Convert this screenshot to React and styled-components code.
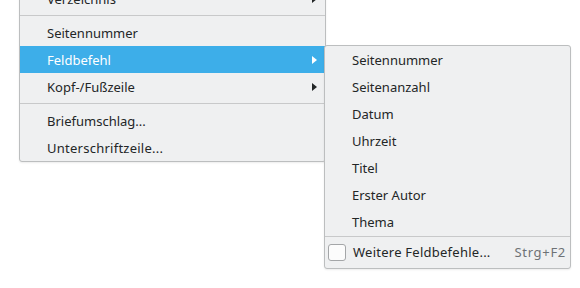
import React from "react";
import styled, { createGlobalStyle } from "styled-components";

const GlobalStyle = createGlobalStyle`
  html, body {
    margin: 0;
    padding: 0;
    background: #ffffff;
  }
  body {
    font-family: "Noto Sans", "DejaVu Sans", sans-serif;
    font-size: 13px;
    color: #232627;
    overflow: hidden;
  }
`;

const Stage = styled.div`
  display: flex;
  align-items: flex-start;
  width: 580px;
  height: 288px;
  overflow: hidden;
  padding-left: 19px;
  box-sizing: border-box;
`;

const Menu = styled.div`
  box-sizing: border-box;
  width: ${(p) => p.width}px;
  margin-top: ${(p) => p.top}px;
  margin-left: ${(p) => p.left || 0}px;
  padding-bottom: ${(p) => p.bottomPad || 0}px;
  background: #eff0f1;
  border: 1px solid #bcbebf;
  border-radius: 3px;
  position: relative;
  z-index: ${(p) => (p.sub ? 2 : 1)};
  box-shadow: 0 1px 2px rgba(0, 0, 0, 0.08);
`;

const Row = styled.div`
  display: flex;
  align-items: center;
  height: ${(p) => p.h || 27}px;
  padding-left: ${(p) => (p.withIcon ? 3 : 27)}px;
  padding-right: 5px;
  background: ${(p) => (p.active ? "#3daee9" : "transparent")};
  color: ${(p) => (p.active ? "#ffffff" : "#232627")};
  white-space: nowrap;
`;

const Label = styled.span`
  flex: 1;
  letter-spacing: ${(p) => (p.loose ? "0.25px" : "normal")};
`;

const Arrow = styled.span`
  width: 0;
  height: 0;
  margin-right: 3px;
  border-top: 4.5px solid transparent;
  border-bottom: 4.5px solid transparent;
  border-left: 5px solid ${(p) => (p.active ? "#ffffff" : "#232627")};
`;

const Shortcut = styled.span`
  color: #6e7276;
  letter-spacing: 0.7px;
  margin-right: -1px;
`;

const Check = styled.span`
  box-sizing: border-box;
  width: 18px;
  height: 17px;
  margin-right: 7px;
  border: 1px solid #a4a6a8;
  border-radius: 3px;
  background: #fcfcfc;
`;

const Separator = styled.div`
  height: 1px;
  margin: ${(p) => p.gap}px 0;
  background: #c8c9ca;
`;

export default function App() {
  const fields = [
    "Seitennummer",
    "Seitenanzahl",
    "Datum",
    "Uhrzeit",
    "Titel",
    "Erster Autor",
    "Thema",
  ];
  return (
    <>
      <GlobalStyle />
      <Stage>
        <Menu width={307} top={-16}>
          <Row>
            <Label>Verzeichnis</Label>
            <Arrow />
          </Row>
          <Separator gap={3} />
          <Row>
            <Label>Seitennummer</Label>
          </Row>
          <Row active>
            <Label>Feldbefehl</Label>
            <Arrow active />
          </Row>
          <Row>
            <Label>Kopf-/Fußzeile</Label>
            <Arrow />
          </Row>
          <Separator gap={3} />
          <Row>
            <Label>Briefumschlag...</Label>
          </Row>
          <Row>
            <Label loose>Unterschriftzeile...</Label>
          </Row>
        </Menu>
        <Menu sub width={247} top={45} left={-2} bottomPad={2}>
          {fields.map((f) => (
            <Row key={f}>
              <Label>{f}</Label>
            </Row>
          ))}
          <Separator gap={1} />
          <Row withIcon h={28}>
            <Check />
            <Label loose>Weitere Feldbefehle...</Label>
            <Shortcut>Strg+F2</Shortcut>
          </Row>
        </Menu>
      </Stage>
    </>
  );
}
